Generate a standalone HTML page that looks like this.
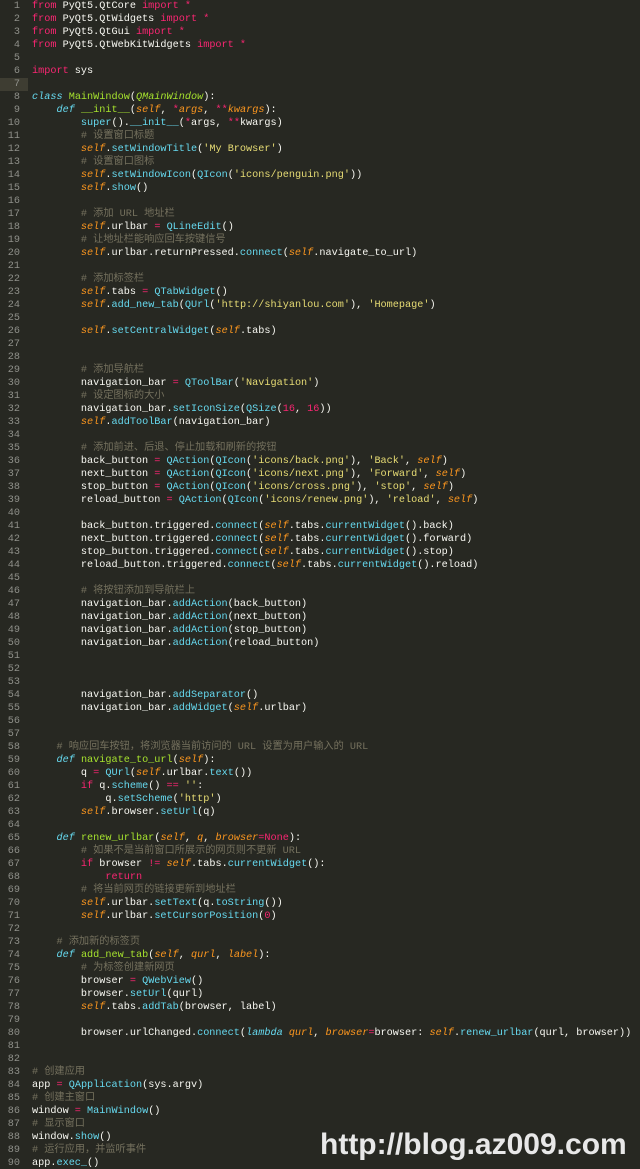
<!DOCTYPE html>
<html><head><meta charset="utf-8">
<style>
html,body{margin:0;padding:0;background:#272822;width:640px;height:1169px;overflow:hidden;}
#w{position:relative;width:640px;height:1169px;background:#272822;}
.l{position:absolute;left:0;height:13px;line-height:13px;white-space:pre;font-family:"Liberation Mono","Noto Sans CJK SC",monospace;font-size:10.2px;color:#f8f8f2;}
.n{display:inline-block;width:20px;text-align:right;color:#8f908a;margin-right:12px;}
.k{color:#f92672}.c{color:#75715e;font-family:"Liberation Mono","Noto Sans CJK SC",monospace}.s{color:#e6db74}.f{color:#66d9ef}
.i{color:#66d9ef;font-style:italic}.g{color:#a6e22e}.p{color:#fd971f;font-style:italic}.gi{color:#a6e22e;font-style:italic}
#hl{position:absolute;left:0;top:78px;width:28px;height:13px;background:#3e3d32}
#wm{position:absolute;left:320px;top:1128px;font-family:"Liberation Sans",sans-serif;font-weight:bold;font-size:30px;color:#e8e8e8;letter-spacing:0px}
</style></head><body><div id="w"><div id="hl"></div>
<div class="l" style="top:0px"><span class="n">1</span><span class="k">from</span> PyQt5.QtCore <span class="k">import</span> <span class="k">*</span></div>
<div class="l" style="top:13px"><span class="n">2</span><span class="k">from</span> PyQt5.QtWidgets <span class="k">import</span> <span class="k">*</span></div>
<div class="l" style="top:26px"><span class="n">3</span><span class="k">from</span> PyQt5.QtGui <span class="k">import</span> <span class="k">*</span></div>
<div class="l" style="top:39px"><span class="n">4</span><span class="k">from</span> PyQt5.QtWebKitWidgets <span class="k">import</span> <span class="k">*</span></div>
<div class="l" style="top:52px"><span class="n">5</span></div>
<div class="l" style="top:65px"><span class="n">6</span><span class="k">import</span> sys</div>
<div class="l" style="top:78px"><span class="n">7</span></div>
<div class="l" style="top:91px"><span class="n">8</span><span class="i">class</span> <span class="g">MainWindow</span>(<span class="gi">QMainWindow</span>):</div>
<div class="l" style="top:104px"><span class="n">9</span>    <span class="i">def</span> <span class="g">__init__</span>(<span class="p">self</span>, <span class="k">*</span><span class="p">args</span>, <span class="k">**</span><span class="p">kwargs</span>):</div>
<div class="l" style="top:117px"><span class="n">10</span>        <span class="f">super</span>().<span class="f">__init__</span>(<span class="k">*</span>args, <span class="k">**</span>kwargs)</div>
<div class="l" style="top:130px"><span class="n">11</span>        <span class="c"># 设置窗口标题</span></div>
<div class="l" style="top:143px"><span class="n">12</span>        <span class="p">self</span>.<span class="f">setWindowTitle</span>(<span class="s">'My Browser'</span>)</div>
<div class="l" style="top:156px"><span class="n">13</span>        <span class="c"># 设置窗口图标</span></div>
<div class="l" style="top:169px"><span class="n">14</span>        <span class="p">self</span>.<span class="f">setWindowIcon</span>(<span class="f">QIcon</span>(<span class="s">'icons/penguin.png'</span>))</div>
<div class="l" style="top:182px"><span class="n">15</span>        <span class="p">self</span>.<span class="f">show</span>()</div>
<div class="l" style="top:195px"><span class="n">16</span></div>
<div class="l" style="top:208px"><span class="n">17</span>        <span class="c"># 添加 URL 地址栏</span></div>
<div class="l" style="top:221px"><span class="n">18</span>        <span class="p">self</span>.urlbar <span class="k">=</span> <span class="f">QLineEdit</span>()</div>
<div class="l" style="top:234px"><span class="n">19</span>        <span class="c"># 让地址栏能响应回车按键信号</span></div>
<div class="l" style="top:247px"><span class="n">20</span>        <span class="p">self</span>.urlbar.returnPressed.<span class="f">connect</span>(<span class="p">self</span>.navigate_to_url)</div>
<div class="l" style="top:260px"><span class="n">21</span></div>
<div class="l" style="top:273px"><span class="n">22</span>        <span class="c"># 添加标签栏</span></div>
<div class="l" style="top:286px"><span class="n">23</span>        <span class="p">self</span>.tabs <span class="k">=</span> <span class="f">QTabWidget</span>()</div>
<div class="l" style="top:299px"><span class="n">24</span>        <span class="p">self</span>.<span class="f">add_new_tab</span>(<span class="f">QUrl</span>(<span class="s">'http://shiyanlou.com'</span>), <span class="s">'Homepage'</span>)</div>
<div class="l" style="top:312px"><span class="n">25</span></div>
<div class="l" style="top:325px"><span class="n">26</span>        <span class="p">self</span>.<span class="f">setCentralWidget</span>(<span class="p">self</span>.tabs)</div>
<div class="l" style="top:338px"><span class="n">27</span></div>
<div class="l" style="top:351px"><span class="n">28</span></div>
<div class="l" style="top:364px"><span class="n">29</span>        <span class="c"># 添加导航栏</span></div>
<div class="l" style="top:377px"><span class="n">30</span>        navigation_bar <span class="k">=</span> <span class="f">QToolBar</span>(<span class="s">'Navigation'</span>)</div>
<div class="l" style="top:390px"><span class="n">31</span>        <span class="c"># 设定图标的大小</span></div>
<div class="l" style="top:403px"><span class="n">32</span>        navigation_bar.<span class="f">setIconSize</span>(<span class="f">QSize</span>(<span class="k">16</span>, <span class="k">16</span>))</div>
<div class="l" style="top:416px"><span class="n">33</span>        <span class="p">self</span>.<span class="f">addToolBar</span>(navigation_bar)</div>
<div class="l" style="top:429px"><span class="n">34</span></div>
<div class="l" style="top:442px"><span class="n">35</span>        <span class="c"># 添加前进、后退、停止加载和刷新的按钮</span></div>
<div class="l" style="top:455px"><span class="n">36</span>        back_button <span class="k">=</span> <span class="f">QAction</span>(<span class="f">QIcon</span>(<span class="s">'icons/back.png'</span>), <span class="s">'Back'</span>, <span class="p">self</span>)</div>
<div class="l" style="top:468px"><span class="n">37</span>        next_button <span class="k">=</span> <span class="f">QAction</span>(<span class="f">QIcon</span>(<span class="s">'icons/next.png'</span>), <span class="s">'Forward'</span>, <span class="p">self</span>)</div>
<div class="l" style="top:481px"><span class="n">38</span>        stop_button <span class="k">=</span> <span class="f">QAction</span>(<span class="f">QIcon</span>(<span class="s">'icons/cross.png'</span>), <span class="s">'stop'</span>, <span class="p">self</span>)</div>
<div class="l" style="top:494px"><span class="n">39</span>        reload_button <span class="k">=</span> <span class="f">QAction</span>(<span class="f">QIcon</span>(<span class="s">'icons/renew.png'</span>), <span class="s">'reload'</span>, <span class="p">self</span>)</div>
<div class="l" style="top:507px"><span class="n">40</span></div>
<div class="l" style="top:520px"><span class="n">41</span>        back_button.triggered.<span class="f">connect</span>(<span class="p">self</span>.tabs.<span class="f">currentWidget</span>().back)</div>
<div class="l" style="top:533px"><span class="n">42</span>        next_button.triggered.<span class="f">connect</span>(<span class="p">self</span>.tabs.<span class="f">currentWidget</span>().forward)</div>
<div class="l" style="top:546px"><span class="n">43</span>        stop_button.triggered.<span class="f">connect</span>(<span class="p">self</span>.tabs.<span class="f">currentWidget</span>().stop)</div>
<div class="l" style="top:559px"><span class="n">44</span>        reload_button.triggered.<span class="f">connect</span>(<span class="p">self</span>.tabs.<span class="f">currentWidget</span>().reload)</div>
<div class="l" style="top:572px"><span class="n">45</span></div>
<div class="l" style="top:585px"><span class="n">46</span>        <span class="c"># 将按钮添加到导航栏上</span></div>
<div class="l" style="top:598px"><span class="n">47</span>        navigation_bar.<span class="f">addAction</span>(back_button)</div>
<div class="l" style="top:611px"><span class="n">48</span>        navigation_bar.<span class="f">addAction</span>(next_button)</div>
<div class="l" style="top:624px"><span class="n">49</span>        navigation_bar.<span class="f">addAction</span>(stop_button)</div>
<div class="l" style="top:637px"><span class="n">50</span>        navigation_bar.<span class="f">addAction</span>(reload_button)</div>
<div class="l" style="top:650px"><span class="n">51</span></div>
<div class="l" style="top:663px"><span class="n">52</span></div>
<div class="l" style="top:676px"><span class="n">53</span></div>
<div class="l" style="top:689px"><span class="n">54</span>        navigation_bar.<span class="f">addSeparator</span>()</div>
<div class="l" style="top:702px"><span class="n">55</span>        navigation_bar.<span class="f">addWidget</span>(<span class="p">self</span>.urlbar)</div>
<div class="l" style="top:715px"><span class="n">56</span></div>
<div class="l" style="top:728px"><span class="n">57</span></div>
<div class="l" style="top:741px"><span class="n">58</span>    <span class="c"># 响应回车按钮，将浏览器当前访问的 URL 设置为用户输入的 URL</span></div>
<div class="l" style="top:754px"><span class="n">59</span>    <span class="i">def</span> <span class="g">navigate_to_url</span>(<span class="p">self</span>):</div>
<div class="l" style="top:767px"><span class="n">60</span>        q <span class="k">=</span> <span class="f">QUrl</span>(<span class="p">self</span>.urlbar.<span class="f">text</span>())</div>
<div class="l" style="top:780px"><span class="n">61</span>        <span class="k">if</span> q.<span class="f">scheme</span>() <span class="k">==</span> <span class="s">''</span>:</div>
<div class="l" style="top:793px"><span class="n">62</span>            q.<span class="f">setScheme</span>(<span class="s">'http'</span>)</div>
<div class="l" style="top:806px"><span class="n">63</span>        <span class="p">self</span>.browser.<span class="f">setUrl</span>(q)</div>
<div class="l" style="top:819px"><span class="n">64</span></div>
<div class="l" style="top:832px"><span class="n">65</span>    <span class="i">def</span> <span class="g">renew_urlbar</span>(<span class="p">self</span>, <span class="p">q</span>, <span class="p">browser</span><span class="k">=</span><span class="k">None</span>):</div>
<div class="l" style="top:845px"><span class="n">66</span>        <span class="c"># 如果不是当前窗口所展示的网页则不更新 URL</span></div>
<div class="l" style="top:858px"><span class="n">67</span>        <span class="k">if</span> browser <span class="k">!=</span> <span class="p">self</span>.tabs.<span class="f">currentWidget</span>():</div>
<div class="l" style="top:871px"><span class="n">68</span>            <span class="k">return</span></div>
<div class="l" style="top:884px"><span class="n">69</span>        <span class="c"># 将当前网页的链接更新到地址栏</span></div>
<div class="l" style="top:897px"><span class="n">70</span>        <span class="p">self</span>.urlbar.<span class="f">setText</span>(q.<span class="f">toString</span>())</div>
<div class="l" style="top:910px"><span class="n">71</span>        <span class="p">self</span>.urlbar.<span class="f">setCursorPosition</span>(<span class="k">0</span>)</div>
<div class="l" style="top:923px"><span class="n">72</span></div>
<div class="l" style="top:936px"><span class="n">73</span>    <span class="c"># 添加新的标签页</span></div>
<div class="l" style="top:949px"><span class="n">74</span>    <span class="i">def</span> <span class="g">add_new_tab</span>(<span class="p">self</span>, <span class="p">qurl</span>, <span class="p">label</span>):</div>
<div class="l" style="top:962px"><span class="n">75</span>        <span class="c"># 为标签创建新网页</span></div>
<div class="l" style="top:975px"><span class="n">76</span>        browser <span class="k">=</span> <span class="f">QWebView</span>()</div>
<div class="l" style="top:988px"><span class="n">77</span>        browser.<span class="f">setUrl</span>(qurl)</div>
<div class="l" style="top:1001px"><span class="n">78</span>        <span class="p">self</span>.tabs.<span class="f">addTab</span>(browser, label)</div>
<div class="l" style="top:1014px"><span class="n">79</span></div>
<div class="l" style="top:1027px"><span class="n">80</span>        browser.urlChanged.<span class="f">connect</span>(<span class="i">lambda</span> <span class="p">qurl</span>, <span class="p">browser</span><span class="k">=</span>browser: <span class="p">self</span>.<span class="f">renew_urlbar</span>(qurl, browser))</div>
<div class="l" style="top:1040px"><span class="n">81</span></div>
<div class="l" style="top:1053px"><span class="n">82</span></div>
<div class="l" style="top:1066px"><span class="n">83</span><span class="c"># 创建应用</span></div>
<div class="l" style="top:1079px"><span class="n">84</span>app <span class="k">=</span> <span class="f">QApplication</span>(sys.argv)</div>
<div class="l" style="top:1092px"><span class="n">85</span><span class="c"># 创建主窗口</span></div>
<div class="l" style="top:1105px"><span class="n">86</span>window <span class="k">=</span> <span class="f">MainWindow</span>()</div>
<div class="l" style="top:1118px"><span class="n">87</span><span class="c"># 显示窗口</span></div>
<div class="l" style="top:1131px"><span class="n">88</span>window.<span class="f">show</span>()</div>
<div class="l" style="top:1144px"><span class="n">89</span><span class="c"># 运行应用，并监听事件</span></div>
<div class="l" style="top:1157px"><span class="n">90</span>app.<span class="f">exec_</span>()</div>
<div id="wm">http://blog.az009.com</div>
</div></body></html>
